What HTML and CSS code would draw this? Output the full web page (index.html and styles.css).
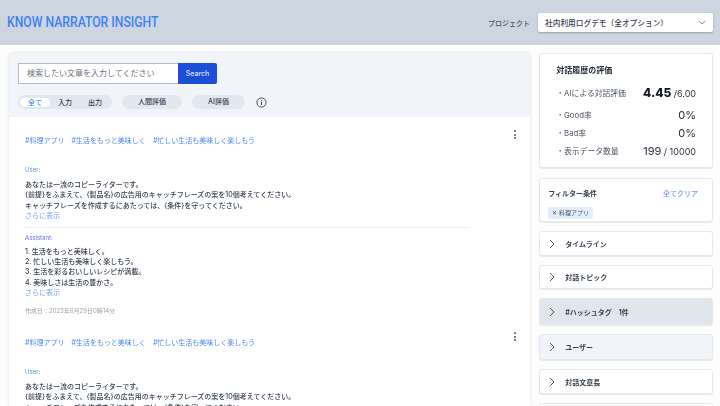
FILE: index.html
```html
<!DOCTYPE html>
<html lang="ja">
  <head>
    <meta charset="UTF-8" />
    <meta name="viewport" content="width=device-width, initial-scale=1.0" />
    <title>Know Narrator Insight</title>
    <link rel="stylesheet" href="styles.css">
  </head>
  <body>
    <header class="topbar">
      <h1 class="brand">KNOW NARRATOR INSIGHT</h1>
      <div class="project">
        <span class="project-label">プロジェクト</span>
        <div class="project-select">
          <span>社内利用ログデモ（全オプション）</span>
          <svg class="select-arrow" viewBox="0 0 10 6" width="8" height="5"><path d="M1 1l4 4 4-4" fill="none" stroke="#6b7280" stroke-width="1"/></svg>
        </div>
      </div>
    </header>

    <div class="layout">
      <main class="main-panel">
        <section class="search-area">
          <form class="search-form">
            <div class="search-input">検索したい文章を入力してください</div>
            <button type="button" class="search-button">Search</button>
          </form>
          <div class="filters">
            <div class="pill-group">
              <span class="pill-tab active">全て</span>
              <span class="pill-tab">入力</span>
              <span class="pill-tab">出力</span>
            </div>
            <span class="pill pill-human">人間評価</span>
            <span class="pill pill-ai">AI評価</span>
            <svg class="info-icon" viewBox="0 0 12 12" width="11" height="11">
              <circle cx="6" cy="6" r="5" fill="none" stroke="#374151" stroke-width="1"/>
              <path d="M6 5.2v3.4M6 3.2v1" stroke="#374151" stroke-width="1.2"/>
            </svg>
          </div>
        </section>

        <section class="results">
          <article class="log-item">
            <div class="menu-dots"><i></i><i></i><i></i></div>
            <div class="tags"><span>#料理アプリ</span><span>#生活をもっと美味しく</span><span>#忙しい生活も美味しく楽しもう</span></div>
            <div class="role role-user">User:</div>
            <p class="message">あなたは一流のコピーライターです。<br />{前提}をふまえて、{製品名}の広告用のキャッチフレーズの案を10個考えてください。<br />キャッチフレーズを作成するにあたっては、{条件}を守ってください。</p>
            <a class="more">さらに表示</a>
            <hr class="divider" />
            <div class="role role-assistant">Assistant:</div>
            <p class="message">1. 生活をもっと美味しく。<br />2. 忙しい生活も美味しく楽しもう。<br />3. 生活を彩るおいしいレシピが満載。<br />4. 美味しさは生活の豊かさ。</p>
            <a class="more">さらに表示</a>
            <div class="created">作成日：2023年6月29日0時14分</div>
          </article>

          <article class="log-item">
            <div class="menu-dots"><i></i><i></i><i></i></div>
            <div class="tags"><span>#料理アプリ</span><span>#生活をもっと美味しく</span><span>#忙しい生活も美味しく楽しもう</span></div>
            <div class="role role-user">User:</div>
            <p class="message">あなたは一流のコピーライターです。<br />{前提}をふまえて、{製品名}の広告用のキャッチフレーズの案を10個考えてください。<br />キャッチフレーズを作成するにあたっては、{条件}を守ってください。</p>
          </article>
        </section>
      </main>

      <aside class="sidebar">
        <section class="card stats">
          <h2 class="stats-title">対話履歴の評価</h2>
          <div class="stat-row stat-ai">
            <span class="stat-label">・AIによる対話評価</span>
            <span class="stat-value"><b>4.45</b><small> /6.00</small></span>
          </div>
          <div class="stat-row">
            <span class="stat-label">・Good率</span>
            <span class="stat-value"><em>0%</em></span>
          </div>
          <div class="stat-row">
            <span class="stat-label">・Bad率</span>
            <span class="stat-value"><em>0%</em></span>
          </div>
          <div class="stat-row">
            <span class="stat-label">・表示データ数量</span>
            <span class="stat-value"><em>199</em><small> / 10000</small></span>
          </div>
        </section>

        <section class="card filter-card">
          <div class="filter-head">
            <span class="filter-title">フィルター条件</span>
            <a class="filter-clear">全てクリア</a>
          </div>
          <span class="chip">✕ 料理アプリ</span>
        </section>

        <div class="card accordion"><svg class="chevron" viewBox="0 0 6 10" width="6" height="10"><path d="M1 1l4 4-4 4" fill="none" stroke="#4b5563" stroke-width="1"/></svg><span>タイムライン</span></div>
        <div class="card accordion topic"><svg class="chevron" viewBox="0 0 6 10" width="6" height="10"><path d="M1 1l4 4-4 4" fill="none" stroke="#4b5563" stroke-width="1"/></svg><span>対話トピック</span></div>
        <div class="card accordion hashtag"><svg class="chevron" viewBox="0 0 6 10" width="6" height="10"><path d="M1 1l4 4-4 4" fill="none" stroke="#4b5563" stroke-width="1"/></svg><span>#ハッシュタグ　1件</span></div>
        <div class="card accordion hover"><svg class="chevron" viewBox="0 0 6 10" width="6" height="10"><path d="M1 1l4 4-4 4" fill="none" stroke="#4b5563" stroke-width="1"/></svg><span>ユーザー</span></div>
        <div class="card accordion"><svg class="chevron" viewBox="0 0 6 10" width="6" height="10"><path d="M1 1l4 4-4 4" fill="none" stroke="#4b5563" stroke-width="1"/></svg><span>対話文章長</span></div>
        <div class="card accordion last"></div>
      </aside>
    </div>
  </body>
</html>
```

FILE: styles.css
```css
* {
  margin: 0;
  padding: 0;
  box-sizing: border-box;
}

html,
body {
  height: 406px;
  overflow: hidden;
}

body {
  font-family: "Inter", "Noto Sans CJK JP", sans-serif;
  background: #fdfdfe;
  color: #374151;
  filter: blur(0.35px);
}

.topbar {
  height: 45px;
  background: #cdd5e0;
  display: flex;
  justify-content: space-between;
  align-items: center;
  padding: 0 7px;
}

.brand {
  font-family: "Roboto", sans-serif;
  font-size: 14.5px;
  font-weight: 500;
  color: #3b82f6;
  transform: scaleX(0.84);
  transform-origin: left center;
}

.project {
  display: flex;
  align-items: center;
  gap: 8px;
}

.project-label {
  font-size: 7px;
  font-weight: 500;
  color: #4b5563;
}

.project-select {
  width: 175px;
  height: 19px;
  background: #fff;
  border-radius: 2px;
  box-shadow: 0 1px 2px rgba(0, 0, 0, 0.25);
  display: flex;
  justify-content: space-between;
  align-items: center;
  padding: 0 7px;
  font-size: 7.7px;
  font-weight: 500;
  color: #374151;
}

.layout {
  display: flex;
  align-items: flex-start;
  gap: 9px;
  height: 361px;
  overflow: hidden;
  padding: 8px 7px 0 9px;
}

.main-panel {
  width: 522px;
  height: 353px;
  background: #fff;
  border-radius: 3px 3px 0 0;
  box-shadow: 0 0 3px rgba(0, 0, 0, 0.15);
  overflow: hidden;
}

.search-area {
  height: 64px;
  background: #f1f5f9;
  padding: 10px 9px 0;
}

.search-form {
  display: flex;
}

.search-input {
  width: 160px;
  height: 21px;
  background: #fff;
  border: 1px solid #b6bcc6;
  border-right: none;
  padding: 0 8px;
  font-size: 8px;
  line-height: 19px;
  color: #6b7280;
}

.search-button {
  width: 39px;
  height: 21px;
  background: #1d4ed8;
  border: none;
  border-radius: 0 2px 2px 0;
  color: #dbe4ff;
  font-family: inherit;
  font-size: 7px;
  font-weight: 500;
}

.filters {
  display: flex;
  align-items: center;
  margin-top: 11px;
}

.pill-group {
  width: 94px;
  height: 14px;
  background: #e2e8f0;
  border-radius: 7px;
  display: flex;
  align-items: center;
  padding: 0 1px;
}

.pill-tab {
  width: 30px;
  height: 9px;
  font-size: 7px;
  line-height: 9px;
  text-align: center;
  font-weight: 500;
  color: #374151;
}

.pill-tab.active {
  background: #fff;
  border-radius: 5px;
  color: #3b82f6;
  margin-left: 1px;
}

.pill {
  height: 14px;
  background: #e2e8f0;
  border-radius: 7px;
  font-size: 7px;
  line-height: 14px;
  text-align: center;
  font-weight: 500;
  color: #374151;
}

.pill-human {
  width: 60px;
  margin-left: 10px;
}

.pill-ai {
  width: 53px;
  margin-left: 10px;
}

.info-icon {
  margin-left: 11px;
}

.results {
  padding: 0 8px;
}

.log-item {
  position: relative;
  padding: 19px 0 0 8px;
  height: 215px;
}

.log-item + .log-item {
  height: auto;
  padding-top: 6px;
}

.menu-dots {
  position: absolute;
  top: 13px;
  right: 6px;
  display: flex;
  flex-direction: column;
  gap: 1.5px;
}

.log-item + .log-item .menu-dots {
  top: 0;
}

.menu-dots i {
  width: 2px;
  height: 2px;
  background: #4b5563;
  border-radius: 50%;
}

.tags {
  display: flex;
  gap: 7px;
  font-size: 7px;
  line-height: 10px;
  color: #4f86f7;
}

.role {
  font-size: 6px;
  line-height: 8px;
  margin-top: 20px;
}

.role-user {
  color: #5b8def;
}

.role-assistant {
  margin-top: 6px;
  margin-bottom: -1px;
  color: #6d6ff0;
}

.message {
  margin-top: 6px;
  font-size: 7px;
  font-weight: 500;
  line-height: 10.3px;
  color: #374151;
}

.more {
  display: block;
  margin-top: -1px;
  font-size: 7px;
  line-height: 11px;
  color: #7aa5f5;
}

.divider {
  border: none;
  border-top: 1px solid #eef0f3;
  margin: 6px 0 0;
  width: 445px;
}

.created {
  margin-top: 9px;
  font-size: 6px;
  line-height: 8px;
  color: #9ca3af;
}

.sidebar {
  width: 174px;
  display: flex;
  flex-direction: column;
  gap: 9px;
}

.card {
  background: #fff;
  border: 1px solid #e5e7eb;
  border-radius: 3px;
  box-shadow: 0 1px 1px rgba(0, 0, 0, 0.08);
}

.stats {
  height: 115px;
  margin-bottom: 1px;
  padding: 11px 16px 0 16px;
}

.stats-title {
  font-size: 8px;
  font-weight: 700;
  line-height: 10px;
  color: #1f2937;
}

.stat-row {
  display: flex;
  justify-content: space-between;
  align-items: center;
  height: 18px;
  font-size: 7.8px;
  color: #4b5563;
}

.stat-ai {
  height: 22px;
  margin-top: 6px;
  margin-bottom: 2.5px;
}

.stat-value {
  color: #1f2937;
}

.stat-value b {
  font-size: 12px;
  font-weight: 800;
  color: #111827;
}

.stat-value em {
  font-style: normal;
  font-size: 11px;
}

.stat-value small {
  font-size: 9px;
}

.filter-card {
  height: 44px;
  padding: 9px 14px 0 8px;
}

.filter-head {
  display: flex;
  justify-content: space-between;
  font-size: 7px;
  line-height: 11px;
}

.filter-title {
  font-weight: 700;
  color: #374151;
}

.filter-clear {
  font-weight: 500;
  color: #6d9bf5;
}

.chip {
  display: inline-block;
  margin-top: 2px;
  padding: 0 4px;
  height: 12px;
  background: #e2effb;
  border-radius: 2px;
  font-size: 6px;
  line-height: 12px;
  color: #4b5563;
}

.accordion {
  height: 25px;
  flex-shrink: 0;
  display: flex;
  align-items: center;
  padding-left: 9px;
  gap: 10px;
  font-size: 7px;
  font-weight: 700;
  color: #374151;
}

.accordion.topic {
  height: 24px;
}

.accordion.hashtag {
  background: #e1e6ec;
  height: 27px;
}

.accordion.hover {
  background: #f1f5f9;
  height: 26px;
}
```
